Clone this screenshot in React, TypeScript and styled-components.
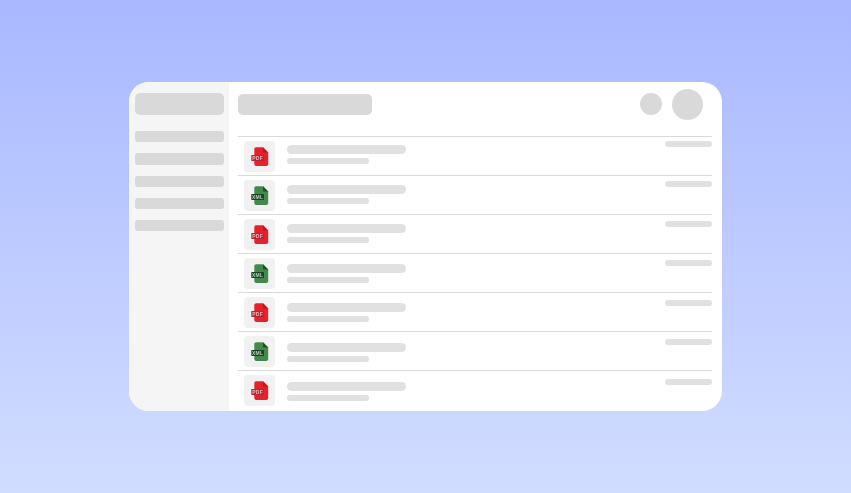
import React from "react";
import styled, { createGlobalStyle } from "styled-components";

const Global = createGlobalStyle`
  html, body { margin: 0; padding: 0; }
  body { font-family: "Liberation Sans", Arial, sans-serif; }
`;

const Page = styled.div`
  width: 851px;
  height: 493px;
  box-sizing: border-box;
  padding: 82px 129px;
  background: linear-gradient(180deg, #a9b8ff 0%, #d1ddff 100%);
  overflow: hidden;
`;

const Card = styled.div`
  width: 593px;
  height: 329px;
  display: flex;
  background: #fff;
  border-radius: 20px;
  overflow: hidden;
`;

const Sidebar = styled.aside`
  width: 99.5px;
  flex: none;
  box-sizing: border-box;
  padding: 11px 5px 0 6px;
  background: #f5f5f5;
  display: flex;
  flex-direction: column;
`;

const SideHead = styled.div`
  height: 22px;
  border-radius: 5px;
  background: #d9d9d9;
  margin-bottom: 16px;
`;

const SideItem = styled.div`
  height: 11.3px;
  border-radius: 3px;
  background: #d9d9d9;
  margin-bottom: 11px;
`;

const Main = styled.main`
  flex: 1;
  min-width: 0;
  box-sizing: border-box;
  padding: 7px 10px 0 9.5px;
  display: flex;
  flex-direction: column;
`;

const Header = styled.header`
  height: 31px;
  margin-bottom: 16px;
  flex: none;
  display: flex;
  align-items: center;
  padding-right: 9px;
`;

const Title = styled.div`
  width: 134px;
  height: 21px;
  border-radius: 5px;
  background: #d9d9d9;
  margin-right: auto;
`;

const Circle = styled.div<{ $size: number; $gap?: number; $lift?: number }>`
  width: ${(p) => p.$size}px;
  height: ${(p) => p.$size}px;
  border-radius: 50%;
  background: #d9d9d9;
  flex: none;
  margin-left: ${(p) => p.$gap ?? 0}px;
  margin-bottom: ${(p) => p.$lift ?? 0}px;
`;

const List = styled.div`
  display: flex;
  flex-direction: column;
`;

const Row = styled.div`
  height: 39px;
  flex: none;
  box-sizing: border-box;
  border-top: 1px solid #dadada;
  display: flex;
  padding: 4px 0 0 6px;
`;

const Tile = styled.div`
  width: 31px;
  height: 31px;
  flex: none;
  border-radius: 4px;
  background: #f1f1f1;
  display: flex;
  align-items: center;
  justify-content: center;
`;

const Lines = styled.div<{ $drift: number }>`
  margin-left: 12px;
  padding-top: ${(p) => 4 + p.$drift * 0.5}px;
  display: flex;
  flex-direction: column;
  gap: 4px;
`;

const LinePrimary = styled.div`
  width: 119px;
  height: 9px;
  border-radius: 5px;
  background: #e1e1e1;
`;

const LineSecondary = styled.div`
  width: 82px;
  height: 6px;
  border-radius: 3px;
  background: #e1e1e1;
`;

const Meta = styled.div<{ $drift: number }>`
  width: 47px;
  height: 6px;
  margin: ${(p) => 0.4 + p.$drift * 0.6}px 0 0 auto;
  border-radius: 3px;
  background: #e1e1e1;
`;

const IconSvg = styled.svg`
  display: block;
  width: 21px;
  height: 21px;
  filter: blur(0.4px);
`;

const Label = styled.text`
  font-family: "Liberation Sans", Arial, sans-serif;
  font-size: 5px;
  font-weight: 700;
  letter-spacing: 0.2px;
`;

type Kind = "pdf" | "xml";

const palette: Record<Kind, { body: string; fold: string; band: string; text: string }> = {
  pdf: { body: "#e5212b", fold: "#bb1821", band: "#b82530", text: "#eeb4b7" },
  xml: { body: "#44894c", fold: "#1d4f26", band: "#1a4323", text: "#b9d2bb" },
};

const FileIcon = ({ kind }: { kind: Kind }) => {
  const c = palette[kind];
  return (
    <IconSvg viewBox="0 0 21 21" aria-hidden="true">
      <path
        d="M5.3 3C5.3 1.9 6.2 1.2 7.2 1.2H14L19.2 6.4V18.1C19.2 19.1 18.4 19.9 17.4 19.9H7.1C6.1 19.9 5.3 19.1 5.3 18.1Z"
        fill={c.body}
      />
      <path d="M14 1.2L19.2 6.4H15C14.4 6.4 14 6 14 5.4Z" fill={c.fold} />
      <rect x="2.3" y="9" width="12.7" height="6" rx="0.4" fill={c.band} />
      <Label x="8.6" y="13.9" textAnchor="middle" fill={c.text}>
        {kind.toUpperCase()}
      </Label>
    </IconSvg>
  );
};

const rows: Kind[] = ["pdf", "xml", "pdf", "xml", "pdf", "xml", "pdf"];

export default function App() {
  return (
    <>
      <Global />
      <Page>
        <Card>
          <Sidebar>
            <SideHead />
            {[0, 1, 2, 3, 4].map((i) => (
              <SideItem key={i} />
            ))}
          </Sidebar>
          <Main>
            <Header>
              <Title />
              <Circle $size={22} $lift={1} />
              <Circle $size={31} $gap={10.5} />
            </Header>
            <List>
              {rows.map((kind, i) => (
                <Row key={i}>
                  <Tile>
                    <FileIcon kind={kind} />
                  </Tile>
                  <Lines $drift={i}>
                    <LinePrimary />
                    <LineSecondary />
                  </Lines>
                  <Meta $drift={i} />
                </Row>
              ))}
            </List>
          </Main>
        </Card>
      </Page>
    </>
  );
}
